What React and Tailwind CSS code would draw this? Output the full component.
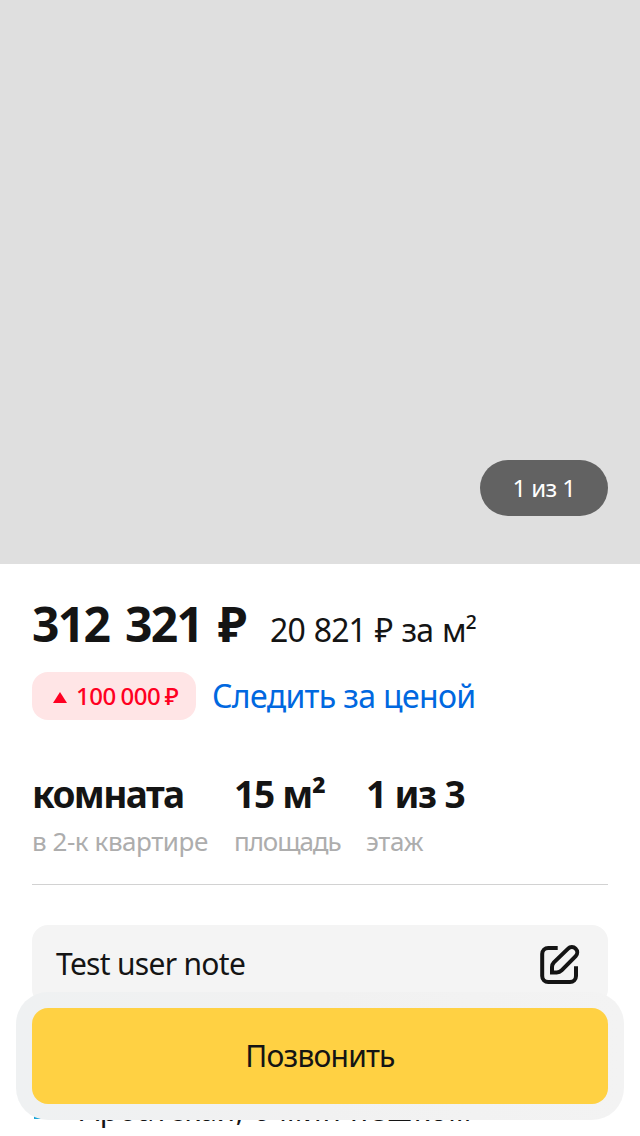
function Label({ className, children }) {
  return <span className={`block whitespace-pre ${className}`}>{children}</span>;
}

function EditIcon() {
  return (
    <svg className="h-[42px] w-[42px]" viewBox="0 0 42 42" fill="none" stroke="#141414" strokeWidth="4">
      <path d="M18.700 4H9.200a6 6 0 0 0-6 6v22a6 6 0 0 0 6 6H31a6 6 0 0 0 6-6V22.300" />
      <path d="M13 28.500v-5.500a7 7 0 0 1 1.900-4.600L29.100 4.700a5.300 5.300 0 0 1 7.600 7.400L22.600 26.400a7 7 0 0 1-4.900 2.100Z" />
    </svg>
  );
}

function Fact({ value, caption, className, valueClass, captionClass }) {
  return (
    <div className={className}>
      <Label className={`h-[51px] text-[37px] font-bold leading-[50px] ${valueClass}`}>{value}</Label>
      <Label className={`h-[44px] text-[26px] leading-[42px] text-[#adadad] ${captionClass}`}>{caption}</Label>
    </div>
  );
}

export default function App() {
  return (
    <main className="relative h-[1136px] w-[640px] overflow-hidden bg-white font-['Noto_Sans',sans-serif] text-[#141414]">
      <section className="flex h-[564px] items-end justify-end bg-[#dfdfdf] pr-8 pb-12">
        <div className="flex h-14 w-32 items-center justify-center rounded-[28px] bg-[#626262] text-white">
          <Label className="text-[24px] leading-[56px] tracking-[-0.6px]">1 из 1</Label>
        </div>
      </section>

      <section className="px-8">
        <div className="flex h-[108px] pt-[28px]">
          <Label className="w-[238px] text-[48px] font-bold leading-[64px] tracking-[-1.7px] [word-spacing:5px]">312 321 ₽</Label>
          <Label className="pt-[6px] text-[32px] leading-[64px] tracking-[-0.9px] [word-spacing:1.5px]">20 821 ₽ за м²</Label>
        </div>
        <div className="flex h-12 items-center gap-4">
          <div className="flex h-12 w-[164px] items-center rounded-2xl bg-[#ffe5e6] pl-[21px] text-[#ff0022]">
            <svg className="mt-[3px] mr-[9px] h-[11px] w-[14px] shrink-0" viewBox="0 0 14 11" fill="currentColor">
              <path d="M7 0l7 11H0z" />
            </svg>
            <Label className="text-[24px] font-medium leading-[46px] tracking-[-0.5px] [word-spacing:-1px]">100 000 ₽</Label>
          </div>
          <Label className="text-[32px] leading-[48px] tracking-[-0.65px] text-[#0068e0]">Следить за ценой</Label>
        </div>
        <div className="flex h-[165px] border-b border-[#d2d2d2] pt-[49px]">
          <Fact
            className="w-[202px]"
            value="комната"
            caption="в 2-к квартире"
            valueClass="tracking-[-1.6px]"
            captionClass="tracking-[-0.45px]"
          />
          <Fact
            className="w-[132px]"
            value="15 м²"
            caption="площадь"
            valueClass="tracking-[-1.2px]"
            captionClass="tracking-[-1.1px]"
          />
          <Fact
            className="w-[120px]"
            value="1 из 3"
            caption="этаж"
            valueClass="tracking-[-1.2px]"
            captionClass="tracking-[-0.3px]"
          />
        </div>
        <div className="mt-10 flex h-20 items-center justify-between rounded-2xl bg-[#f4f4f4] pr-[27px] pl-6">
          <Label className="pb-[2px] text-[30px] leading-[76px] tracking-[-0.7px]">Test user note</Label>
          <EditIcon />
        </div>
        <div className="flex h-[125px] pt-[85px]">
          <svg className="mt-[7px] h-[22px] w-[32px] shrink-0" viewBox="0 0 32 22">
            <path d="M2 19l9 3H2z" fill="#1ba6d8" />
          </svg>
          <Label className="ml-[16px] h-10 text-[30px] leading-[40px] tracking-[0.7px]">Арбатская, 6 мин пешком</Label>
        </div>
      </section>

      <div className="absolute top-[992px] left-4 h-32 w-[608px] rounded-[32px] bg-[linear-gradient(90deg,#eff1f2,#f1f1f1_50%,#f3f3f3)] p-4">
        <button className="flex h-24 w-full items-center justify-center rounded-2xl bg-[#ffd143]">
          <Label className="text-[30px] leading-[96px] tracking-[-0.8px]">Позвонить</Label>
        </button>
      </div>
    </main>
  );
}
